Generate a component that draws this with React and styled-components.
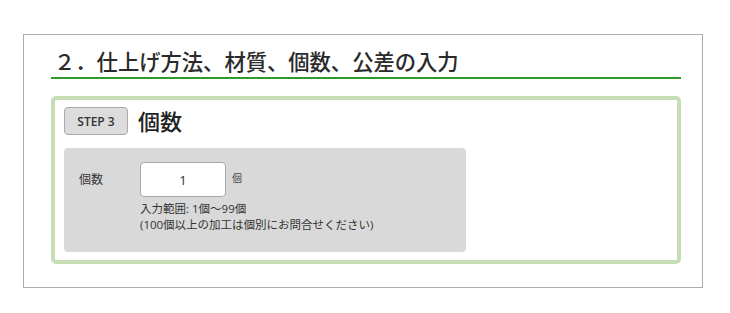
import React, { useState } from "react";
import styled, { createGlobalStyle } from "styled-components";

const GlobalStyle = createGlobalStyle`
  body {
    margin: 0;
    background: #fff;
    font-family: "Open Sans", "Noto Sans CJK JP", sans-serif;
    color: #333;
  }
`;

const Page = styled.div`
  padding: 34px 0 0 23px;
`;

const Section = styled.section`
  box-sizing: content-box;
  width: 630px;
  height: 252px;
  border: 1px solid #acacac;
  padding: 0 21px 0 27px;
`;

const SectionTitle = styled.h2`
  margin: 0;
  padding: 12px 0 0 3px;
  height: 30px;
  line-height: 30px;
  font-size: 21.3px;
  font-weight: 500;
  color: #2a2a2a;
  border-bottom: 2px solid #2f9a2b;
  white-space: nowrap;
`;

const StepBox = styled.div`
  box-sizing: border-box;
  margin-top: 17px;
  height: 168px;
  border: 4px solid #c6deb6;
  border-radius: 5px;
  padding: 7px 9px 0;
`;

const StepHead = styled.div`
  display: flex;
  align-items: center;
  gap: 10px;
`;

const Badge = styled.span`
  display: inline-flex;
  align-items: center;
  justify-content: center;
  box-sizing: border-box;
  width: 64px;
  height: 28px;
  background: #dcdcdc;
  border: 1px solid #a9a9a9;
  border-radius: 4px;
  font-size: 12px;
  font-weight: 600;
  color: #333;
`;

const StepTitle = styled.h3`
  margin: 0;
  font-size: 22px;
  font-weight: 500;
  color: #222;
  line-height: 28px;
`;

const Panel = styled.div`
  margin-top: 13px;
  width: 402px;
  height: 104px;
  box-sizing: border-box;
  background: #d9d9d9;
  border-radius: 4px;
  padding: 14px 15px 0;
  display: flex;
`;

const Label = styled.span`
  width: 61px;
  height: 35px;
  line-height: 35px;
  font-size: 12px;
  color: #333;
`;

const Field = styled.div`
  display: flex;
  flex-direction: column;
`;

const InputRow = styled.div`
  display: flex;
  align-items: center;
  gap: 6px;
`;

const NumberInput = styled.input`
  box-sizing: border-box;
  width: 86px;
  height: 35px;
  border: 1px solid #a9a9a9;
  border-radius: 4px;
  background: #fff;
  text-align: center;
  font-family: "Open Sans", "Noto Sans CJK JP", sans-serif;
  font-size: 13px;
  color: #333;
  outline: none;
`;

const Unit = styled.span`
  font-size: 10px;
  color: #444;
  margin-top: -4px;
`;

const Note = styled.p`
  margin: 4px 0 0;
  font-size: 11.5px;
  line-height: 16px;
  color: #333;
`;

export default function App() {
  const [count, setCount] = useState("1");

  return (
    <>
      <GlobalStyle />
      <Page>
        <Section>
          <SectionTitle>２．仕上げ方法、材質、個数、公差の入力</SectionTitle>
          <StepBox>
            <StepHead>
              <Badge>STEP 3</Badge>
              <StepTitle>個数</StepTitle>
            </StepHead>
            <Panel>
              <Label>個数</Label>
              <Field>
                <InputRow>
                  <NumberInput
                    value={count}
                    onChange={(e) => setCount(e.target.value)}
                  />
                  <Unit>個</Unit>
                </InputRow>
                <Note>
                  入力範囲: 1個～99個
                  <br />
                  (100個以上の加工は個別にお問合せください)
                </Note>
              </Field>
            </Panel>
          </StepBox>
        </Section>
      </Page>
    </>
  );
}
